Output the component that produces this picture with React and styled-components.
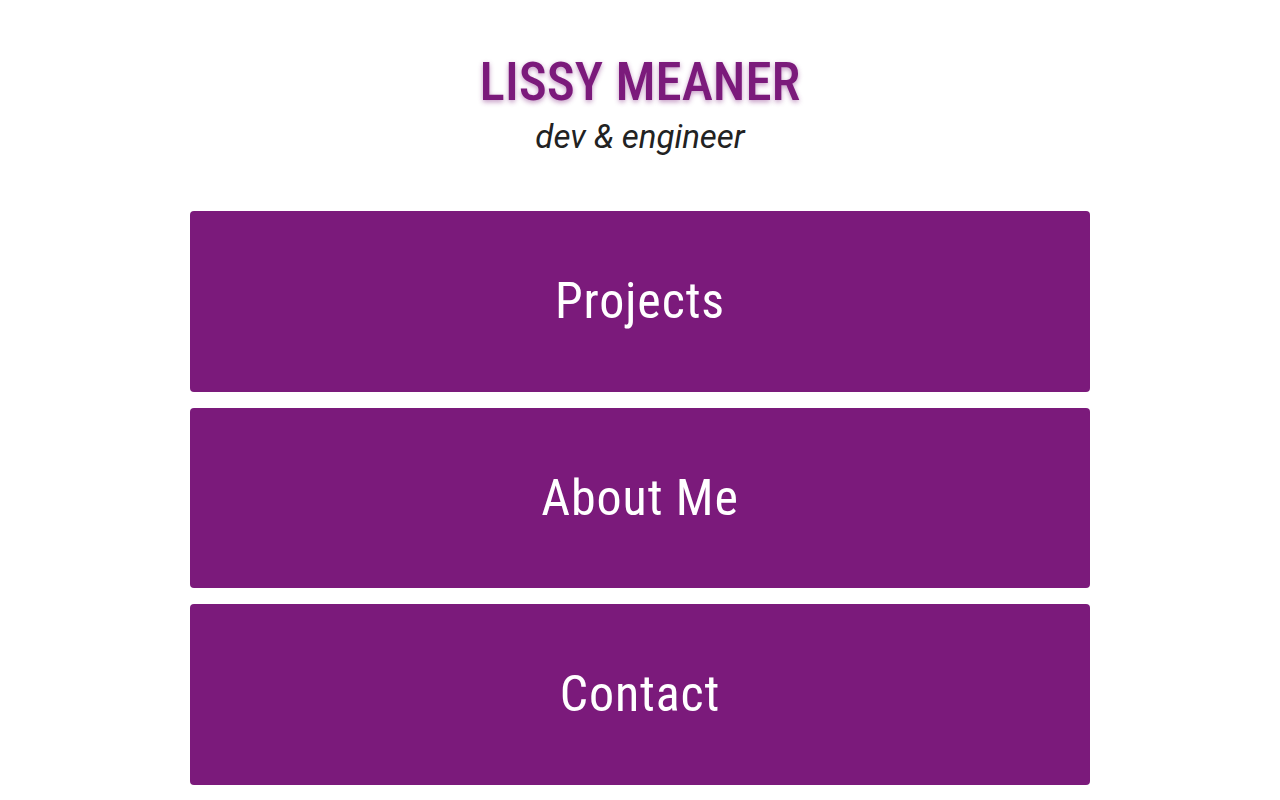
import React from "react";
import styled, { createGlobalStyle } from "styled-components";

const Global = createGlobalStyle`
  html, body { margin: 0; padding: 0; background: #ffffff; }
  body { font-family: Roboto, "Liberation Sans", Arial, sans-serif; }
`;

const Page = styled.div`
  display: flex;
  flex-direction: column;
  align-items: center;
  padding-top: 52px;
`;

const Title = styled.h1`
  margin: 0;
  font-size: 53px;
  line-height: 60px;
  font-weight: 500;
  font-stretch: 75%;
  color: #7b1a7b;
  text-shadow: 0 2px 5px rgba(123, 26, 123, 0.45);
`;

const Subtitle = styled.h2`
  margin: 5px 0 0;
  font-size: 33px;
  line-height: 40px;
  font-weight: 400;
  font-style: italic;
  color: #222222;
`;

const Nav = styled.nav`
  display: flex;
  flex-direction: column;
  gap: 16px;
  width: 900px;
  margin-top: 54px;
`;

const NavButton = styled.a`
  display: flex;
  align-items: center;
  justify-content: center;
  height: 180.5px;
  border-radius: 4px;
  background: #7b1a7b;
  color: #ffffff;
  font-size: 50px;
  font-stretch: 75%;
  letter-spacing: 0.9px;
  text-decoration: none;
  cursor: pointer;
`;

const links = ["Projects", "About Me", "Contact"];

export default function App() {
  return (
    <>
      <Global />
      <Page>
        <Title>LISSY MEANER</Title>
        <Subtitle>dev &amp; engineer</Subtitle>
        <Nav>
          {links.map((l) => (
            <NavButton key={l}>{l}</NavButton>
          ))}
        </Nav>
      </Page>
    </>
  );
}
